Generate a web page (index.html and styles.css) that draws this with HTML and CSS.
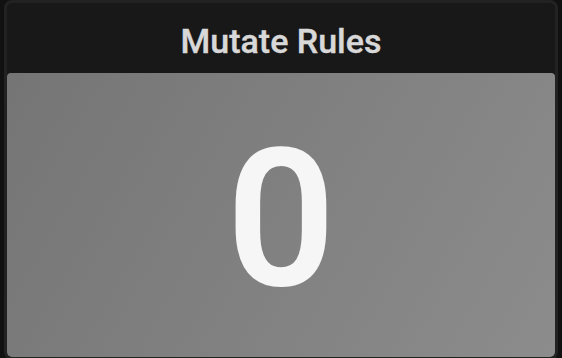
FILE: index.html
```html
<!DOCTYPE html>
<html lang="en">
<head>
    <meta charset="UTF-8">
    <meta name="viewport" content="width=device-width, initial-scale=1.0">
    <title>Mutate Rules</title>
    <link rel="stylesheet" href="styles.css">
</head>
<body>
    <!-- Stat panel -->
    <div class="panel">
        <div class="panel-header">
            <h2>Mutate Rules</h2>
        </div>
        <div class="panel-body">
            <span class="stat-value">0</span>
        </div>
    </div>
</body>
</html>
```

FILE: styles.css
```css
html, body {
    margin: 0;
    padding: 0;
    height: 100%;
}

body {
    background: #111111;
    font-family: Roboto, "Liberation Sans", sans-serif;
    overflow: hidden;
}

.panel {
    box-sizing: border-box;
    margin-left: 4px;
    width: 554px;
    height: 360px;
    background: #181818;
    border: 3px solid #222222;
    border-radius: 8px;
    display: flex;
    flex-direction: column;
    overflow: hidden;
}

.panel-header {
    height: 70px;
    display: flex;
    align-items: center;
    justify-content: center;
}

.panel-header h2 {
    margin: 0;
    font-size: 34px;
    font-weight: 500;
    color: #d8d8d8;
    padding-top: 6px;
    -webkit-text-stroke: 0.4px #d8d8d8;
}

.panel-body {
    flex: 1;
    border-radius: 4px;
    background: linear-gradient(120deg, #757575, #8c8c8c);
    display: flex;
    align-items: center;
    justify-content: center;
}

.stat-value {
    font-size: 190px;
    font-weight: 500;
    color: #f6f6f6;
    line-height: 1;
    padding-top: 8px;
    -webkit-text-stroke: 2px #f6f6f6;
}
```
